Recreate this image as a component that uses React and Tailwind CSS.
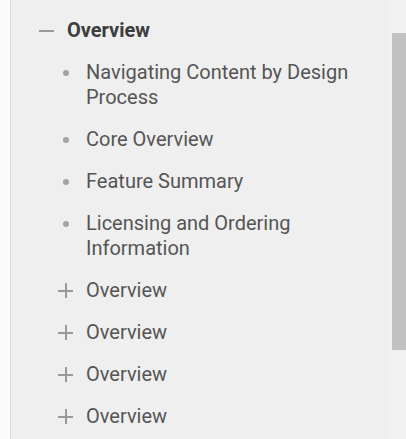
import React from "react";

const font = { fontFamily: "Roboto, 'Noto Sans', sans-serif" };

function Minus() {
  return (
    <span className="flex h-[25px] w-[15px] shrink-0 items-center">
      <span className="block h-[2px] w-[15px] bg-[#9a9a9a]" />
    </span>
  );
}

function Plus() {
  return (
    <span className="relative flex h-[25px] w-[15px] shrink-0 items-center justify-center">
      <span className="block h-[2px] w-[15px] bg-[#9a9a9a]" />
      <span className="absolute left-[6.5px] top-[5px] block h-[15px] w-[2px] bg-[#9a9a9a]" />
    </span>
  );
}

function Dot() {
  return (
    <span className="flex h-[25px] w-[15px] shrink-0 items-center justify-center">
      <span className="block h-[6px] w-[6px] rounded-full bg-[#a3a3a3]" />
    </span>
  );
}

const children = [
  "Navigating Content by Design Process",
  "Core Overview",
  "Feature Summary",
  "Licensing and Ordering Information",
];

export default function App() {
  return (
    <div className="flex h-[439px] w-[406px] overflow-hidden bg-[#fbfbfb]" style={font}>
      <div className="w-[10px] shrink-0" />
      <div className="flex flex-1 border-l border-[#dcdcdc] bg-[#efefef]">
        <div className="flex flex-1 flex-col gap-[17px] pl-[28px] pr-[12px] pt-[18px] text-[20px] leading-[25px] text-[#555555]">
          <div className="flex items-start gap-[13px]">
            <Minus />
            <span className="font-bold text-[#3d3d3d]">Overview</span>
          </div>
          {children.map((t) => (
            <div key={t} className="ml-[19px] flex items-start gap-[13px]">
              <Dot />
              <span>{t}</span>
            </div>
          ))}
          {[0, 1, 2, 3].map((i) => (
            <div key={i} className="ml-[19px] flex items-start gap-[13px]">
              <Plus />
              <span>Overview</span>
            </div>
          ))}
        </div>
        <div className="w-[16px] shrink-0 bg-[#f1f1f1] pl-[2px]">
          <div className="mt-[33px] h-[317px] bg-[#c1c1c1]" />
        </div>
      </div>
    </div>
  );
}
